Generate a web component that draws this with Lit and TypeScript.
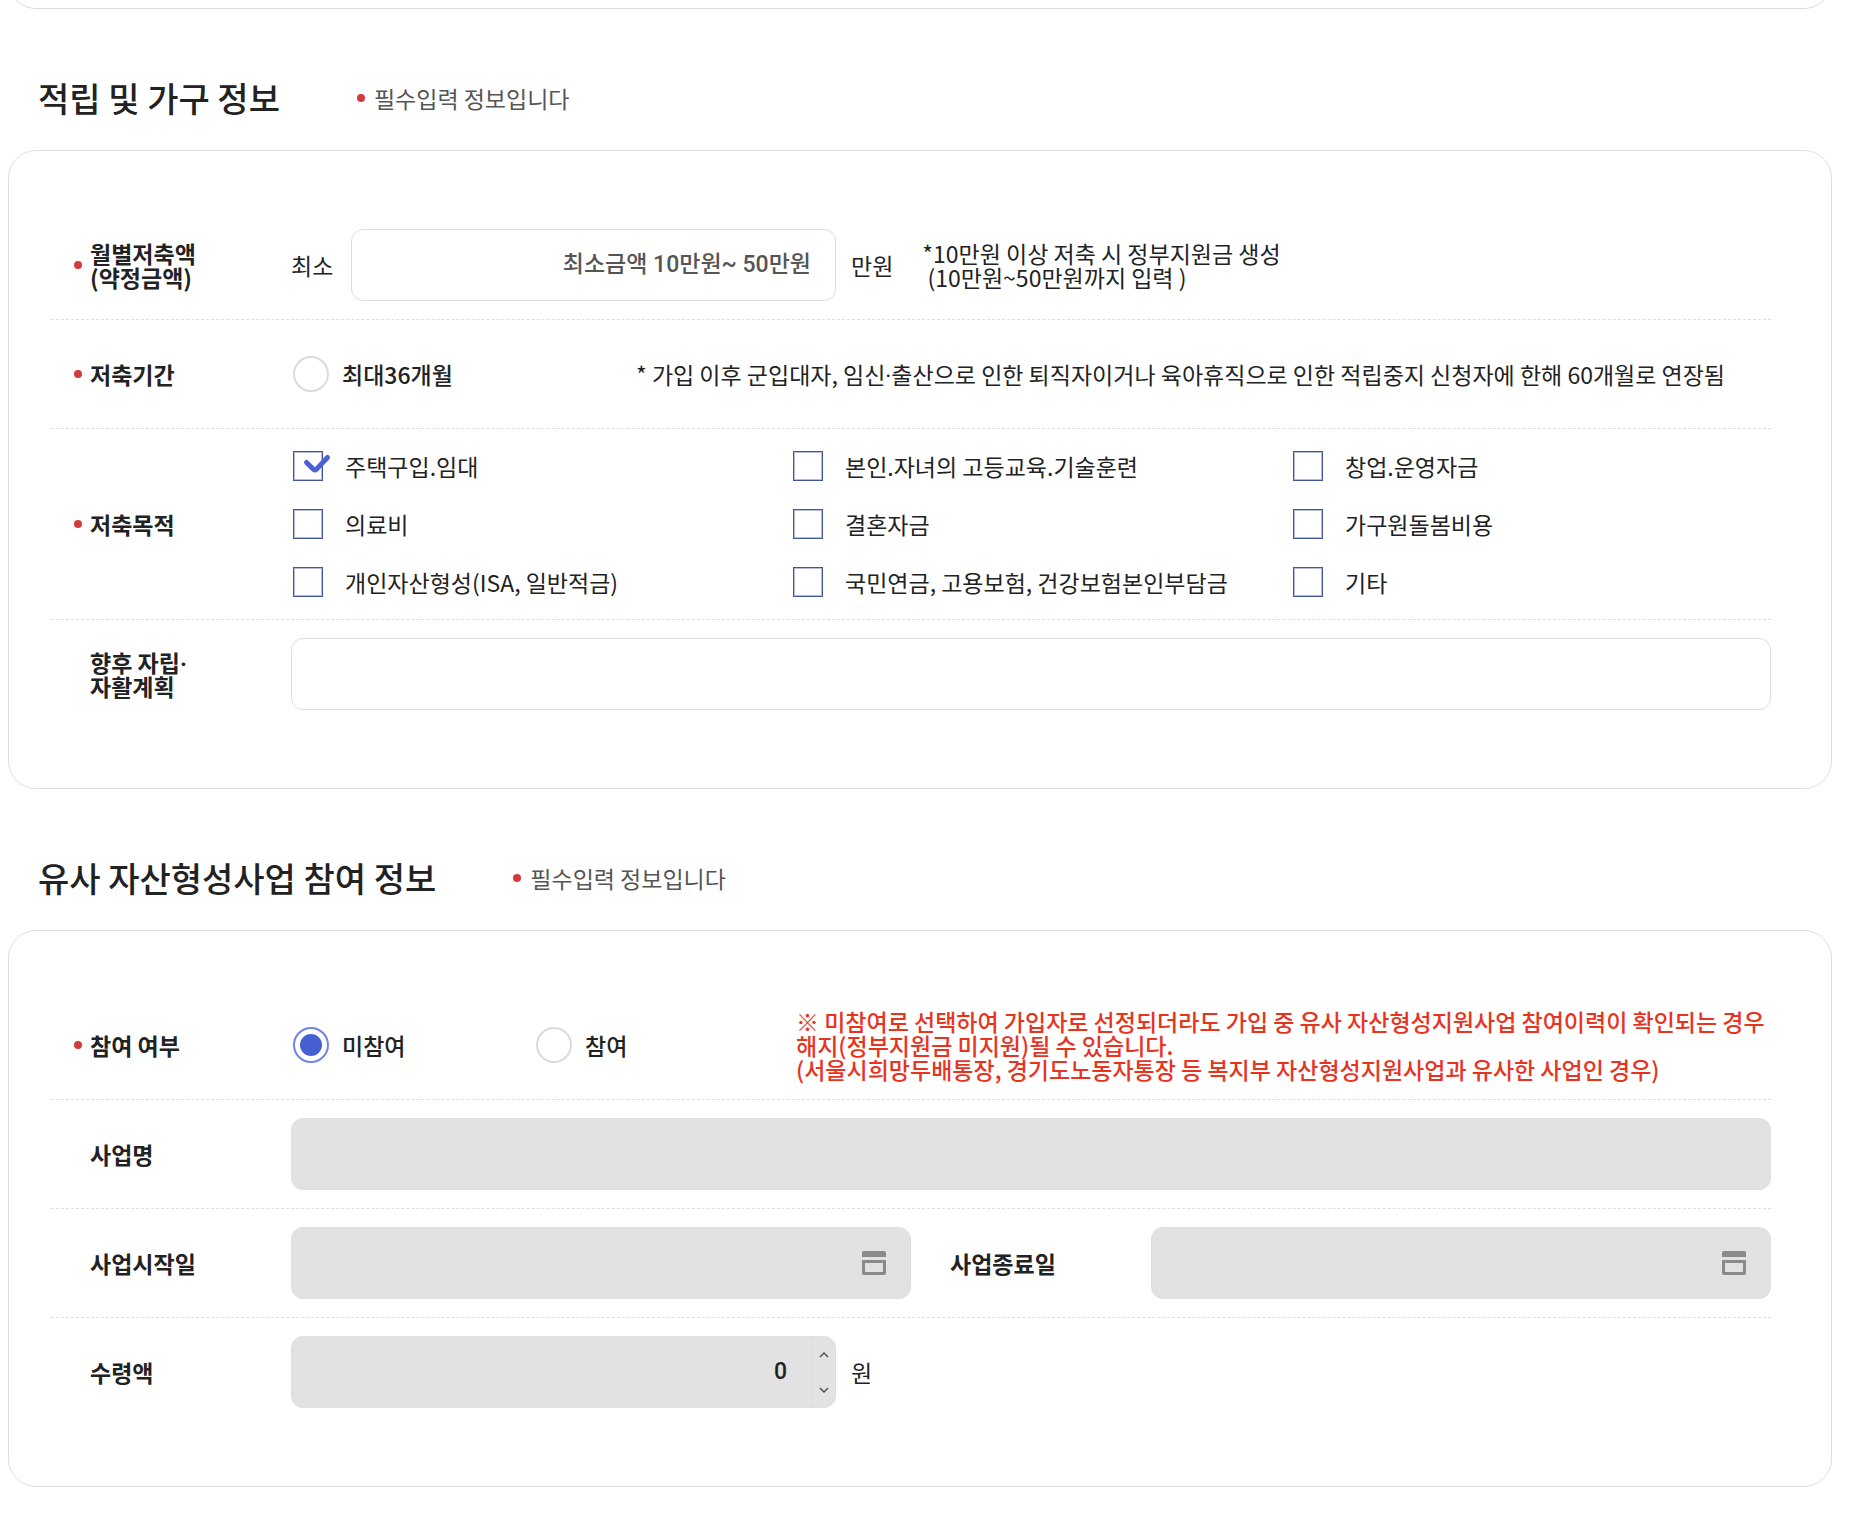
import { LitElement, html, css, svg } from "lit";
import { customElement, state } from "lit/decorators.js";

interface Purpose {
  id: string;
  text: string;
}

const PURPOSES: Purpose[] = [
  { id: "housing", text: "주택구입.임대" },
  { id: "education", text: "본인.자녀의 고등교육.기술훈련" },
  { id: "startup", text: "창업.운영자금" },
  { id: "medical", text: "의료비" },
  { id: "wedding", text: "결혼자금" },
  { id: "care", text: "가구원돌봄비용" },
  { id: "asset", text: "개인자산형성(ISA, 일반적금)" },
  { id: "insurance", text: "국민연금, 고용보험, 건강보험본인부담금" },
  { id: "etc", text: "기타" },
];

const checkMark = html`<svg class="tick" viewBox="0 0 40 30" aria-hidden="true">
  ${svg`<path d="M13.5 11.5 L20.5 18.3 Q22 19.6 23.5 18.3 L34.5 6.5" />`}
</svg>`;

const calendarIcon = html`<svg viewBox="0 0 24 24" width="24" height="24" aria-hidden="true">
  ${svg`<path fill="#8a8a8a" d="M2 0H22Q24 0 24 2V6H0V2Q0 0 2 0Z" />
  <path fill="#8a8a8a" fill-rule="evenodd" d="M0 9H24V22Q24 24 22 24H2Q0 24 0 22ZM3 12V20Q3 21 4 21H20Q21 21 21 20V12Z" />`}
</svg>`;

const arrow = (d: string) => html`<svg viewBox="0 0 10 6" width="10" height="6" aria-hidden="true">
  ${svg`<path d=${d} fill="none" stroke="#4c4c4c" stroke-width="1.4" />`}
</svg>`;

@customElement("app-root")
export class AppRoot extends LitElement {
  static styles = css`
    :host {
      display: block;
      background: #fff;
      color: #222;
      font-family: "Noto Sans CJK KR", sans-serif;
      font-size: 23px;
      line-height: 24px;
    }
    *,
    *::before {
      box-sizing: border-box;
    }
    input,
    button {
      font: inherit;
      color: inherit;
      margin: 0;
    }
    .page {
      display: flow-root;
      padding: 0 20px 33px 8px;
    }
    .card {
      border: 1px solid #dedede;
      border-radius: 28px;
      padding: 60px 60px 60px 42px;
    }
    .card-end {
      height: 60px;
      margin-top: -51px;
      padding: 0;
    }
    .head {
      display: flex;
      align-items: center;
      gap: 77px;
      padding: 64px 30px 27px;
    }
    h2 {
      margin: 0;
      font-size: 34px;
      line-height: 50px;
      font-weight: 500;
    }
    .hint {
      display: flex;
      align-items: center;
      gap: 9px;
      margin: 0;
      color: #555;
    }
    .hint::before,
    .required::before {
      content: "";
      flex: none;
      width: 8px;
      height: 8px;
      border-radius: 50%;
      background: #d03c3c;
    }
    .row {
      display: flex;
      align-items: center;
      min-height: 108px;
      padding: 18px 0;
    }
    .row + .row {
      border-top: 1px dashed #dedede;
      min-height: 109px;
    }
    .name {
      flex: none;
      display: flex;
      align-items: center;
      gap: 8px;
      width: 240px;
      padding-left: 39px;
      font-weight: 700;
    }
    .required {
      padding-left: 23px;
    }
    .body {
      flex: 1;
      display: flex;
      align-items: center;
      min-width: 0;
    }
    .half {
      flex: 1;
      display: flex;
      align-items: center;
      min-width: 0;
    }
    .amount {
      display: flex;
      align-items: center;
      gap: 18px;
      width: 545px;
      margin-right: 15px;
    }
    .field {
      flex: 1;
      display: flex;
      min-width: 0;
      height: 72px;
      border: 1px solid #dedede;
      border-radius: 12px;
      background: #fff;
      overflow: hidden;
    }
    .off {
      background: #e2e2e2;
    }
    .box {
      flex: 1;
      min-width: 0;
      padding: 0 24px;
      border: 0;
      outline: 0;
      background: transparent;
      font-family: Roboto, "Noto Sans CJK KR", sans-serif;
      font-weight: 500;
      appearance: none;
    }
    .box::placeholder {
      color: #555;
      opacity: 1;
    }
    .box::-webkit-inner-spin-button {
      display: none;
    }
    .end {
      text-align: right;
    }
    .icon-button {
      flex: none;
      display: grid;
      place-items: center;
      width: 72px;
      padding: 0;
      border: 0;
      background: transparent;
    }
    .stepper {
      flex: none;
      display: flex;
      flex-direction: column;
      width: 24px;
      border-left: 1px solid #dedede;
    }
    .step {
      flex: 1;
      display: grid;
      place-items: center;
      padding: 0;
      border: 0;
      background: transparent;
    }
    .note {
      margin: 0;
    }
    .beside {
      margin-left: 29px;
      white-space: pre-wrap;
    }
    .wide {
      flex: 1;
    }
    .dot {
      font-family: Roboto, sans-serif;
      line-height: 0;
    }
    .warning {
      color: #e8331f;
      font-weight: 500;
    }
    .choice {
      display: flex;
      align-items: center;
      gap: 13px;
      padding-left: 2px;
      font-weight: 500;
    }
    .period {
      width: 345px;
    }
    .join {
      width: 243px;
    }
    .join-last {
      width: 262px;
    }
    .radio {
      flex: none;
      display: grid;
      place-items: center;
      width: 36px;
      height: 36px;
      border: 2px solid #dbdbdb;
      border-radius: 50%;
      background: #fff;
      appearance: none;
    }
    .radio:checked {
      border-color: #7084e0;
    }
    .radio:checked::before {
      content: "";
      width: 22px;
      height: 22px;
      border-radius: 50%;
      background: #4560d0;
    }
    .purposes {
      flex: 1;
      display: grid;
      grid-template-columns: repeat(3, 1fr);
      gap: 28px 20px;
      margin: 0;
      padding: 4px 0;
    }
    .purpose {
      position: relative;
      display: flex;
      align-items: center;
      gap: 22px;
      height: 30px;
      padding-left: 2px;
      white-space: nowrap;
    }
    .check {
      flex: none;
      width: 30px;
      height: 30px;
      border: 1px solid #43569c;
      box-shadow: inset 0 0 0 1px #b4bcd9;
      background: #fff;
      appearance: none;
    }
    .tick {
      position: absolute;
      left: 2px;
      top: 0;
      width: 40px;
      height: 30px;
      fill: none;
      stroke: #4a62d6;
      stroke-width: 5;
      stroke-linecap: round;
      pointer-events: none;
    }
  `;

  @state() private chosen = new Set<string>(["housing"]);
  @state() private joined = false;

  private toggle(id: string) {
    const next = new Set(this.chosen);
    if (!next.delete(id)) next.add(id);
    this.chosen = next;
  }

  private head(title: string) {
    return html`<header class="head">
      <h2>${title}</h2>
      <p class="hint">필수입력 정보입니다</p>
    </header>`;
  }

  private dateField(id: string, text: string) {
    return html`<div class="half">
      <label class="name" for=${id}>${text}</label>
      <div class="field off">
        <input class="box" id=${id} type="text" disabled />
        <button class="icon-button" type="button" disabled aria-label=${text}>${calendarIcon}</button>
      </div>
    </div>`;
  }

  render() {
    return html`<main class="page">
      <div class="card card-end"></div>

      <section>
        ${this.head("적립 및 가구 정보")}
        <div class="card">
          <div class="row">
            <label class="name required" for="monthly"><span>월별저축액<br />(약정금액)</span></label>
            <div class="body">
              <div class="amount">
                <span>최소</span>
                <div class="field">
                  <input class="box end" id="monthly" type="text" placeholder="최소금액 10만원~ 50만원" />
                </div>
              </div>
              <span>만원</span>
              <p class="note beside">${"*10만원 이상 저축 시 정부지원금 생성\n (10만원~50만원까지 입력 )"}</p>
            </div>
          </div>
          <div class="row">
            <div class="name required">저축기간</div>
            <div class="body">
              <label class="choice period"><input class="radio" type="radio" name="period" />최대36개월</label>
              <p class="note wide">
                * 가입 이후 군입대자, 임신<span class="dot">·</span>출산으로 인한 퇴직자이거나 육아휴직으로 인한 적립중지 신청자에 한해 60개월로 연장됨
              </p>
            </div>
          </div>
          <div class="row">
            <div class="name required">저축목적</div>
            <div class="purposes" role="group" aria-label="저축목적">
              ${PURPOSES.map(
                (p) => html`<label class="purpose">
                  <input
                    class="check"
                    type="checkbox"
                    .checked=${this.chosen.has(p.id)}
                    @change=${() => this.toggle(p.id)}
                  />
                  ${this.chosen.has(p.id) ? checkMark : ""}
                  <span>${p.text}</span>
                </label>`
              )}
            </div>
          </div>
          <div class="row">
            <label class="name" for="plan"><span>향후 자립<span class="dot">·</span><br />자활계획</span></label>
            <div class="field"><input class="box" id="plan" type="text" /></div>
          </div>
        </div>
      </section>

      <section>
        ${this.head("유사 자산형성사업 참여 정보")}
        <div class="card">
          <div class="row">
            <div class="name required">참여 여부</div>
            <div class="body">
              <label class="choice join"
                ><input
                  class="radio"
                  type="radio"
                  name="join"
                  .checked=${!this.joined}
                  @change=${() => (this.joined = false)}
                />미참여</label
              >
              <label class="choice join-last"
                ><input
                  class="radio"
                  type="radio"
                  name="join"
                  .checked=${this.joined}
                  @change=${() => (this.joined = true)}
                />참여</label
              >
              <p class="note wide warning">
                ※ 미참여로 선택하여 가입자로 선정되더라도 가입 중 유사 자산형성지원사업 참여이력이 확인되는 경우<br />해지(정부지원금 미지원)될 수 있습니다.<br />(서울시희망두배통장, 경기도노동자통장 등 복지부 자산형성지원사업과 유사한 사업인 경우)
              </p>
            </div>
          </div>
          <div class="row">
            <label class="name" for="project">사업명</label>
            <div class="field off"><input class="box" id="project" type="text" disabled /></div>
          </div>
          <div class="row">${this.dateField("start", "사업시작일")} ${this.dateField("finish", "사업종료일")}</div>
          <div class="row">
            <label class="name" for="received">수령액</label>
            <div class="body">
              <div class="amount">
                <div class="field off">
                  <input class="box end" id="received" type="number" value="0" disabled />
                  <div class="stepper">
                    <button class="step" type="button" disabled aria-label="증가">${arrow("M1 5 L5 1 L9 5")}</button>
                    <button class="step" type="button" disabled aria-label="감소">${arrow("M1 1 L5 5 L9 1")}</button>
                  </div>
                </div>
              </div>
              <span>원</span>
            </div>
          </div>
        </div>
      </section>
    </main>`;
  }
}
